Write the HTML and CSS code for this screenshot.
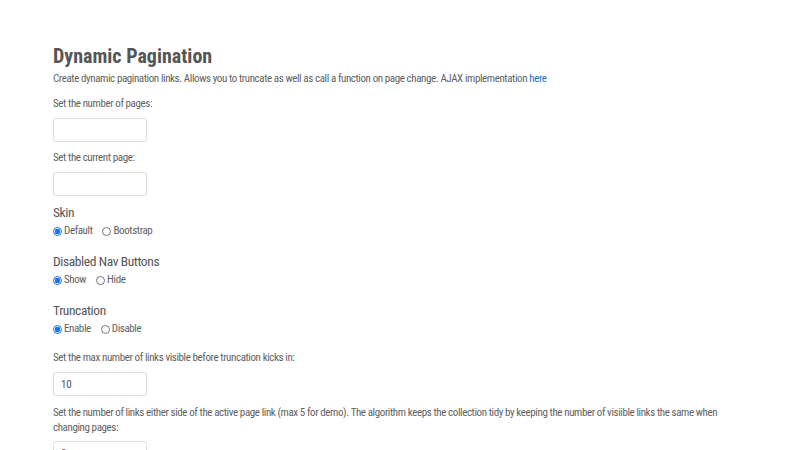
FILE: index.html
```html
<!DOCTYPE html>
<html>
<head>
<meta charset="utf-8">
<link rel="stylesheet" href="styles.css">
</head>
<body>
<main class="page">
  <h1 class="title">Dynamic Pagination</h1>
  <p class="intro">Create dynamic pagination links. Allows you to truncate as well as call a function on page change. AJAX implementation <a href="#">here</a></p>

  <div class="field field-first">
    <label class="label">Set the number of pages:</label>
    <input class="input" type="text">
  </div>
  <div class="field">
    <label class="label">Set the current page:</label>
    <input class="input" type="text">
  </div>

  <div class="group group-first">
    <h2 class="group-title">Skin</h2>
    <div class="radios">
      <label class="radio"><input type="radio" name="skin" checked><span>Default</span></label>
      <label class="radio"><input type="radio" name="skin"><span>Bootstrap</span></label>
    </div>
  </div>
  <div class="group">
    <h2 class="group-title">Disabled Nav Buttons</h2>
    <div class="radios">
      <label class="radio"><input type="radio" name="nav" checked><span>Show</span></label>
      <label class="radio"><input type="radio" name="nav"><span>Hide</span></label>
    </div>
  </div>
  <div class="group">
    <h2 class="group-title">Truncation</h2>
    <div class="radios">
      <label class="radio"><input type="radio" name="trunc" checked><span>Enable</span></label>
      <label class="radio"><input type="radio" name="trunc"><span>Disable</span></label>
    </div>
  </div>

  <div class="field field-after">
    <label class="label">Set the max number of links visible before truncation kicks in:</label>
    <input class="input" type="text" value="10">
  </div>
  <div class="field">
    <label class="label label-long">Set the number of links either side of the active page link (max 5 for demo). The algorithm keeps the collection tidy by keeping the number of visiible links the same when changing pages:</label>
    <input class="input" type="text" value="2">
  </div>
</main>
</body>
</html>
```

FILE: styles.css
```css
html, body {
  margin: 0;
  padding: 0;
  background: #ffffff;
}
body {
  font-family: "Roboto Condensed", Roboto, "Liberation Sans Narrow", sans-serif;
  font-stretch: condensed;
  color: #5f5f5f;
  font-size: 11px;
  letter-spacing: -0.4px;
}
.page {
  padding: 44px 53px 0 53px;
  width: 694px;
}
.title {
  margin: 0;
  font-size: 20px;
  line-height: 24px;
  font-weight: 700;
  letter-spacing: 0;
  color: #555555;
}
.intro {
  margin: 4px 0 0 0;
  font-size: 11px;
  line-height: 14px;
}
.intro a {
  color: #1a6fc0;
  text-decoration: none;
}
.field {
  display: flex;
  flex-direction: column;
  align-items: flex-start;
  margin-top: 9px;
}
.field-first {
  margin-top: 11px;
}
.field-after {
  margin-top: 13px;
}
.label {
  font-size: 11px;
  line-height: 14px;
  margin-bottom: 7px;
}
.label-long {
  line-height: 15px;
  margin-bottom: 6px;
}
.input {
  box-sizing: border-box;
  width: 94px;
  height: 24px;
  margin: 0;
  border: 1px solid #dddddd;
  border-radius: 3px;
  padding: 0 7px;
  font-family: inherit;
  font-stretch: condensed;
  font-size: 11px;
  letter-spacing: -0.2px;
  color: #555555;
  background: #fff;
  outline: none;
}
.group {
  margin-top: 11px;
}
.group-first {
  margin-top: 6px;
}
.group-title {
  margin: 0;
  font-size: 13.5px;
  line-height: 20px;
  font-weight: 400;
  letter-spacing: -0.4px;
  color: #555555;
}
.radios {
  display: flex;
  gap: 10px;
  line-height: 18px;
}
.radio {
  display: flex;
  align-items: center;
  gap: 2px;
}
.radio input {
  margin: 0;
  width: 9px;
  height: 9px;
  accent-color: #1a73e8;
}
```
